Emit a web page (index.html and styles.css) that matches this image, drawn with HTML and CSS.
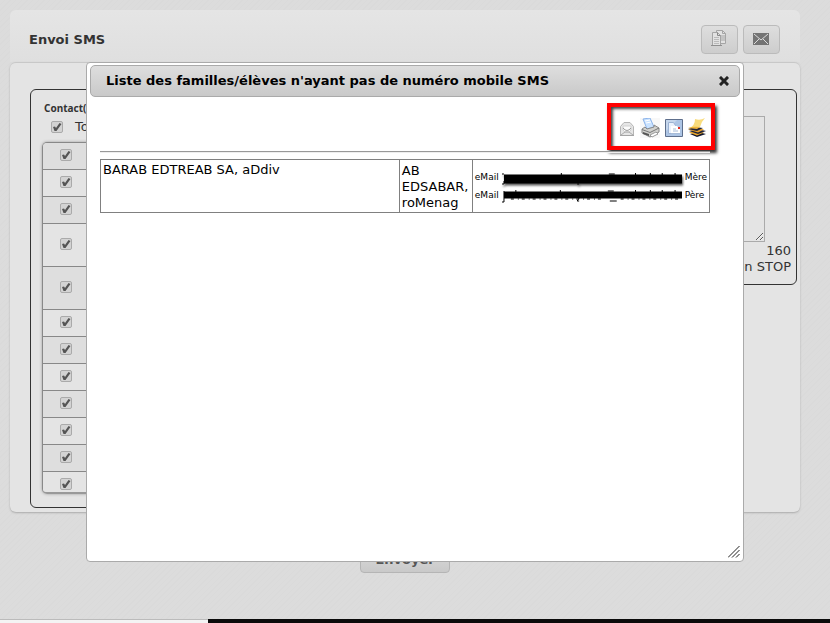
FILE: index.html
```
<!DOCTYPE html>
<html lang="fr">
<head>
    <meta charset="utf-8">
    <title>Envoi SMS</title>
    <link rel="stylesheet" href="styles.css">
</head>
<body>

<div class="page">
    <div class="header">
        <h1>Envoi SMS</h1>
        <button class="tool" aria-label="Copier">
            <svg width="16" height="17" viewBox="0 0 16 17" fill="#e2e2e2" stroke="#a5a5a5">
                <path d="M5.500 .5h6l3 3v10h-9z"/>
                <path d="M11.500 .5v3h3M10 6h4M10 8h4M10 10h4" fill="none"/>
                <path d="M1.500 2.500h5l3 3v10h-8z"/>
                <path d="M6.500 2.500v3h3" fill="none" stroke="#888"/>
                <path d="M3 7.500h5M3 9.500h5M3 11.500h5M3 13.500h5" fill="none" stroke="#bbb"/>
                <path d="M0 15.500h11" stroke="#909090"/>
            </svg>
        </button>
        <button class="tool" aria-label="eMail">
            <svg width="16" height="12" viewBox="0 0 16 12">
                <path d="M0 0h16v12H0z" fill="#747474"/>
                <path d="M1 1l7 6 7-6M1 11l5-5M15 11l-5-5" fill="none" stroke="#dcdcdc"/>
            </svg>
        </button>
    </div>

    <div class="panel">
        <div class="box contacts">
            <h2>Contact(s)</h2>
            <label class="all"><input type="checkbox" checked> Tous</label>
            <div class="list">
                <table>
                    <tr><td><input type="checkbox" aria-label="Contact 1" checked></td></tr>
                    <tr><td><input type="checkbox" aria-label="Contact 2" checked></td></tr>
                    <tr><td><input type="checkbox" aria-label="Contact 3" checked></td></tr>
                    <tr class="tall"><td><input type="checkbox" aria-label="Contact 4" checked></td></tr>
                    <tr class="tall"><td><input type="checkbox" aria-label="Contact 5" checked></td></tr>
                    <tr><td><input type="checkbox" aria-label="Contact 6" checked></td></tr>
                    <tr><td><input type="checkbox" aria-label="Contact 7" checked></td></tr>
                    <tr><td><input type="checkbox" aria-label="Contact 8" checked></td></tr>
                    <tr><td><input type="checkbox" aria-label="Contact 9" checked></td></tr>
                    <tr><td><input type="checkbox" aria-label="Contact 10" checked></td></tr>
                    <tr><td><input type="checkbox" aria-label="Contact 11" checked></td></tr>
                    <tr><td><input type="checkbox" aria-label="Contact 12" checked></td></tr>
                </table>
            </div>
        </div>
        <div class="box message">
            <textarea aria-label="Message"></textarea>
            <div>160</div>
            <div>Mention STOP</div>
        </div>
    </div>

    <button class="send">Envoyer</button>
    <div class="footer"><div class="status"></div></div>
</div>

<div class="overlay">
    <div class="dialog" role="dialog" aria-labelledby="dialogTitle">
        <div class="titlebar">
            <span id="dialogTitle">Liste des familles/élèves n'ayant pas de numéro mobile SMS</span>
            <button class="close" aria-label="Fermer">
                <svg width="10" height="10" viewBox="0 0 10 10"><path d="M2 2l6 6M8 2l-6 6" stroke="#222" stroke-width="3" stroke-linecap="square"/></svg>
            </button>
        </div>
        <div class="content">
            <div class="icons">
                <button aria-label="Envoyer par eMail">
                    <svg width="18" height="20" viewBox="0 0 18 20">
                        <path d="M2.500 8.500L6 4.500h6l3.500 4v9h-13z" fill="#e6e6e6" stroke="#b5b5b5"/>
                        <path d="M5 8h8v4l-2 2H7l-2-2z" fill="#fcfcfc" stroke="#d0d0d0"/>
                        <path d="M5 10q4 5 8 0" fill="none" stroke="#999"/>
                        <path d="M3 17l4-3h4l4 3" fill="none" stroke="#aaa"/>
                        <path d="M2 17.500h14" stroke="#a5a5a5"/>
                    </svg>
                </button>
                <button aria-label="Imprimer">
                    <svg width="20" height="20" viewBox="0 0 20 20">
                        <path d="M0 0h20v20H0z" fill="#f8f8f8"/>
                        <path d="M3 1l7-1 4 9-7 2z" fill="#c9e2ff" stroke="#8db4ea"/>
                        <path d="M5 3l5-1M6 5l5-1" stroke="#fff"/>
                        <path d="M2 11l3-2 2 2 7-2v-2l5 3v4l-9 5-8-4z" fill="#d0d0cd" stroke="#888"/>
                        <path d="M2 11.500l8 3 9-4.500" fill="none" stroke="#777"/>
                        <path d="M3 14l6 2v2l-6-2z" fill="#555"/>
                        <path d="M10 17l6-3 2 2-6 3z" fill="#fff" stroke="#999"/>
                    </svg>
                </button>
                <button aria-label="Document">
                    <svg width="18" height="18" viewBox="0 0 18 18">
                        <path d="M.5 .5h17v17H.5z" fill="#c5d6ec" stroke="#5e6f8c"/>
                        <path d="M1 12L12 1h5v16H1z" fill="#adc5e5"/>
                        <path d="M3.500 3.500h5l2 3v8h-7z" fill="#eaf1fc" stroke="#9db3d3"/>
                        <path d="M6 7h6l3 3v5H6z" fill="#fff"/>
                        <path d="M6 14.500h9M8 10h3M8 12h5" fill="none" stroke="#a8bcd8"/>
                        <path d="M13 8h2v2h-2z" fill="#e32b22"/>
                    </svg>
                </button>
                <button aria-label="Archiver">
                    <svg width="20" height="20" viewBox="0 0 20 20">
                        <path d="M3 16l8-2 8 2-9 3z" fill="#14182c"/>
                        <path d="M2 14.500l8-2 7 2-7 3z" fill="#eba62b"/>
                        <path d="M2 13l8-2 9 2-8 3z" fill="#20233a"/>
                        <path d="M1 11.500l8-2 8 2-6 3z" fill="#e7a02c"/>
                        <path d="M1 11l7-2 8 1-6 3z" fill="#252636"/>
                        <path d="M8 1q5 2 10-1-4 4-5 9-5 1-11 1 6-2 6-9z" fill="#f9dc7c"/>
                        <path d="M1 10q6-2 12-1l-3 2z" fill="#eeb43c"/>
                    </svg>
                </button>
            </div>
            <hr>
            <table class="families">
                <tr>
                    <td class="name">BARAB EDTREAB SA, aDdiv</td>
                    <td class="pupil">AB EDSABAR, roMenag</td>
                    <td class="mails">
                        <div class="mail">eMail
                            <svg class="masked thick" viewBox="0 0 182 14" preserveAspectRatio="none">
                                <path d="M2 9h180" stroke="#000" stroke-width="9"/>
                                <path d="M1 3v2M2 11v3H0M60 3v2M78 14h-2M108 4h6M135 3v2M150 3v2M162 3v2M175 3v2" fill="none" stroke="#000"/>
                            </svg>
                            Mère</div>
                        <div class="mail">eMail
                            <svg class="masked" viewBox="0 0 182 14" preserveAspectRatio="none">
                                <path d="M2 7h180" stroke="#000" stroke-width="7"/>
                                <path d="M2 3v11H0M14 2v2M59 2v2M78 13h-2l2-3M107 3h6M109 13h7M135 2v2M150 2v2M162 2v2M175 2v2" fill="none" stroke="#000"/>
                                <path d="M9 11h94M120 11h58" stroke="#000" stroke-dasharray="3 4 1 3"/>
                            </svg>
                            Père</div>
                    </td>
                </tr>
            </table>
        </div>
        <svg class="grip" width="12" height="12" viewBox="0 0 12 12"><path d="M0 11.500L11.500 0M4 11.500L11.500 4M8 11.500L11.500 8" stroke="#222"/></svg>
    </div>
</div>

</body>
</html>
```

FILE: styles.css
```
* {
    box-sizing: border-box;
}

body {
    margin: 0;
    overflow: hidden;
    color: #333;
    background: #dcdcdc;
    font: 13px/16px "DejaVu Sans", Verdana, sans-serif;
}

button {
    margin: 0;
    padding: 0;
    border: none;
    background: none;
    font: inherit;
    color: inherit;
}

svg {
    display: block;
}

.page {
    height: 100vh;
    padding-top: 10px;
    display: flex;
    flex-direction: column;
    background: repeating-linear-gradient(135deg, #dcdcdc 0 3px, #dadada 3px 4px);
}

/*---------Header-------------*/
.header {
    display: flex;
    align-items: center;
    gap: 5px;
    height: 52px;
    margin: 0 30px 0 10px;
    padding: 7px 20px 0 19px;
    border-radius: 6px 6px 0 0;
    background: linear-gradient(#e5e5e5, #dfdfdf);
}

.header h1 {
    flex: 1;
    margin: 0;
    font-size: 13px;
}

.tool {
    display: flex;
    align-items: center;
    justify-content: center;
    width: 37px;
    height: 29px;
    padding: 0 2px 2px 0;
    border: 1px solid #bbb;
    border-radius: 4px;
    background: linear-gradient(#dedede, #cdcdcd);
}

/*---------Main panel-------------*/
.panel {
    display: grid;
    grid-template-columns: 1fr 1fr;
    gap: 10px;
    align-items: start;
    margin: 0 30px 0 10px;
    padding: 26px 3px 4px 20px;
    border-top: 1px solid #c8c8c8;
    border-radius: 6px;
    background: #e4e4e4;
    box-shadow: 0 1px 2px #aaa;
}

.box {
    border: 1px solid #333;
    border-radius: 6px;
}

.contacts {
    height: 419px;
    padding: 10px 11px;
}

.contacts h2 {
    margin: 0 0 0 2px;
    font: bold 10px/16px "Noto Sans", sans-serif;
}

.all {
    display: flex;
    align-items: center;
    gap: 12px;
    height: 22px;
    padding-left: 9px;
}

input[type=checkbox] {
    appearance: none;
    display: block;
    width: 12px;
    height: 12px;
    margin: 0;
    border: 1px solid #aaa;
    border-radius: 2px;
    background: #d3d3d3;
}

input[type=checkbox]::before {
    content: "";
    display: block;
    height: 10px;
    background: #555;
    clip-path: polygon(10% 50%, 30% 45%, 40% 60%, 75% 10%, 95% 20%, 45% 90%, 25% 90%);
}

.list {
    height: 352px;
    margin-top: 4px;
    overflow: hidden;
    border: 1px solid #888;
    border-bottom: 2px solid #999;
    border-radius: 5px;
    box-shadow: 0 0 3px #999;
}

.list table {
    width: 100%;
    border-spacing: 0;
}

.list tr {
    height: 27px;
    background: #e4e4e4;
}

.list tr:nth-child(odd) {
    background: #dedede;
}

.list .tall {
    height: 43px;
}

.list td {
    padding: 0 17px 2px;
    border-bottom: 1px solid #888;
}

.message {
    height: 196px;
    padding: 26px 5px 0;
    text-align: right;
}

.message textarea {
    display: block;
    width: calc(100% - 26px);
    height: 126px;
    margin-bottom: 1px;
    border: 1px solid #aaa;
    background: #e4e4e4;
}

.send {
    align-self: center;
    width: 90px;
    height: 30px;
    margin: 31px 20px 0 0;
    padding-top: 4px;
    border: 1px solid #b5b5b5;
    border-radius: 4px;
    background: linear-gradient(#dedede, #c9c9c9);
    font-weight: bold;
    color: #555;
}

.footer {
    height: 4px;
    margin-top: auto;
    background: #0a0a0a;
}

.status {
    width: 25%;
    height: 4px;
    border-top: 1px solid #bbb;
    background: #f4f4f4;
}

/*---------Dialog-------------*/
.overlay {
    position: absolute;
    top: 0;
    left: 0;
    right: 0;
    padding: 62px 86px 0;
}

.dialog {
    position: relative;
    min-height: 500px;
    padding: 2px 3px;
    border: 1px solid #aaa;
    border-radius: 4px;
    background: #fff;
    color: #000;
}

.titlebar {
    display: flex;
    align-items: center;
    justify-content: space-between;
    height: 32px;
    padding: 0 10px 0 15px;
    border: 1px solid #aaa;
    border-radius: 5px;
    background: linear-gradient(#dedede, #c9c9c9);
    font-weight: bold;
}

.content {
    padding: 6px 25px 0 10px;
}

.icons {
    display: flex;
    align-items: center;
    justify-content: space-between;
    width: 108px;
    height: 47px;
    margin-left: auto;
    padding: 3px 4px 0 7px;
    border: 4px solid #f00;
    box-shadow: 2px 3px 3px #333, inset 2px 2px 3px #444;
}

hr {
    margin: 1px 5px 6px 0;
    border: none;
    border-top: 1px solid #999;
    border-bottom: 1px solid #eee;
}

.families {
    width: calc(100% - 5px);
    border-collapse: collapse;
}

.families td {
    padding: 2px;
    border: 1px solid gray;
    vertical-align: top;
}

.families .pupil {
    width: 73px;
    padding: 3px 2px 1px;
}

.families .mails {
    width: 235px;
    vertical-align: middle;
}

.mail {
    display: flex;
    align-items: center;
    gap: 3px;
    font-size: 9px;
    line-height: 18px;
}

.masked {
    flex: none;
    width: 180px;
    height: 14px;
    overflow: visible;
}

.masked.thick {
    filter: drop-shadow(1px 2px 1px #555);
}

.grip {
    position: absolute;
    right: 3px;
    bottom: 3px;
}
```
